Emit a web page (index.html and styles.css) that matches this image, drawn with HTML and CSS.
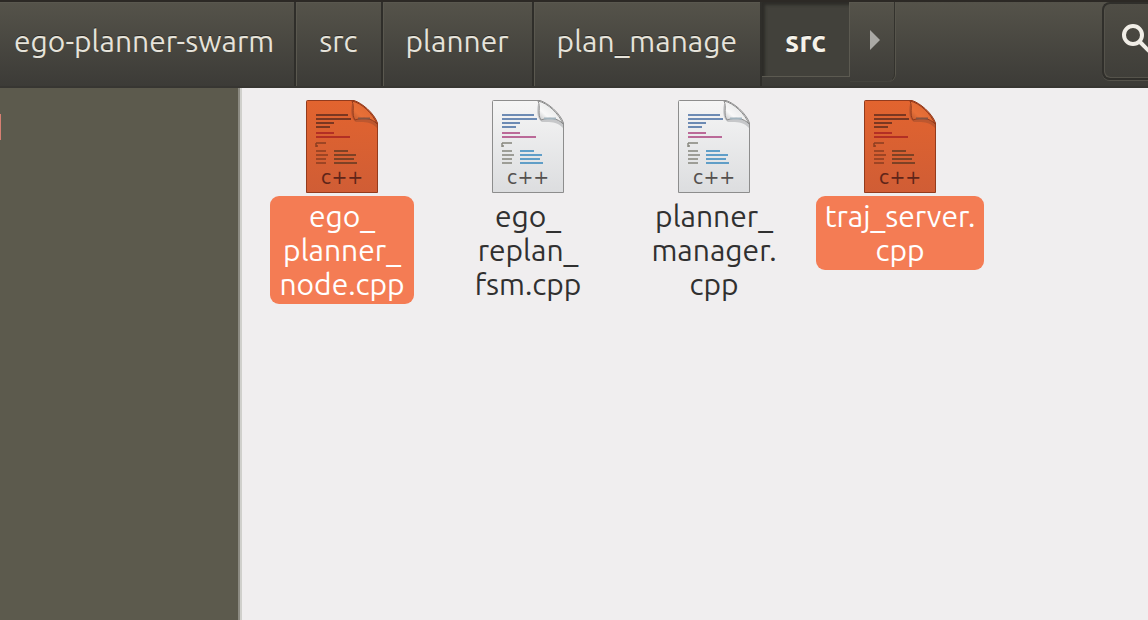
FILE: index.html
```html
<!DOCTYPE html>

<html lang="en">
    <head>
        <meta charset="UTF-8">
        <meta name="viewport" content="width=device-width, initial-scale=1.0">
        <title>src</title>
        <link rel="stylesheet" href="styles.css">
    </head>

    <body>
        <!-- shared file icon, colours come from .file-icon -->
        <svg class="defs" width="0" height="0" aria-hidden="true">
            <defs>
                <linearGradient id="paper" x1="0" y1="0" x2="0" y2="1">
                    <stop offset="0" stop-color="#f5f5f5"/>
                    <stop offset="1" stop-color="#dcdddf"/>
                </linearGradient>
                <linearGradient id="paper-selected" x1="0" y1="0" x2="0" y2="1">
                    <stop offset="0" stop-color="#e2642f"/>
                    <stop offset="1" stop-color="#d05d35"/>
                </linearGradient>
                <linearGradient id="curl" x1="0" y1="1" x2="1" y2="0">
                    <stop offset="0" stop-color="#a9abad"/>
                    <stop offset=".35" stop-color="#f8f8f8"/>
                    <stop offset="1" stop-color="#dadbdc"/>
                </linearGradient>
                <linearGradient id="curl-selected" x1="0" y1="1" x2="1" y2="0">
                    <stop offset="0" stop-color="#a9502c"/>
                    <stop offset=".35" stop-color="#e87038"/>
                    <stop offset="1" stop-color="#d96330"/>
                </linearGradient>
                <symbol id="cpp-file" viewBox="0 0 72 93">
                    <path class="page" d="M1.500 .5H48C56 3 68 13 71.500 23V92.500H.5V1.500Q.5 .5 1.500 .5Z"/>
                    <path class="fold-shadow" d="M46 4C44 13 46 20 50 22C57 22 65 21 71 28V23L50 6Z"/>
                    <path class="fold" d="M46 1C49 7 45 14 49 20C57 17 66 18 71 24C67 14 56 3 46 1Z"/>
                    <path class="fold-line" d="M52 18.500H64"/>
                    <g fill="none" stroke-width="1.4">
                        <path class="code-blue" d="M10 15H42M10 19H45M10 23H28M10 27H24"/>
                        <path class="code-pink" d="M10 33H28M10 37H44"/>
                        <path class="code-gray" d="M10 43H20M10 46H12M10 51H20M10 55H22M10 59H20M10 63H20M10 43V47"/>
                        <path class="code-light" d="M28 51H42M28 55H50M28 59H48M28 63H51"/>
                    </g>
                    <text class="file-type" x="15" y="84">c++</text>
                </symbol>
            </defs>
        </svg>

        <header class="toolbar">
            <nav class="path-bar" aria-label="Path">
                <button class="path-button root" type="button">ego-planner-swarm</button>
                <button class="path-button" type="button">src</button>
                <button class="path-button" type="button">planner</button>
                <button class="path-button" type="button">plan_manage</button>
                <button class="path-button active" type="button" aria-current="page">src</button>
                <button class="path-next" type="button" aria-label="Next folder">
                    <svg width="12" height="20" viewBox="0 0 12 20"><path d="M1 0L11 10L1 20Z"/></svg>
                </button>
            </nav>
            <button class="search-button" type="button" aria-label="Search">
                <svg width="36" height="36" viewBox="0 0 36 36">
                    <circle cx="12" cy="12" r="9"/>
                    <path d="M19 19L32 32"/>
                </svg>
            </button>
        </header>

        <div class="window">
            <aside class="sidebar">
                <div class="sidebar-marker"></div>
            </aside>
            <main class="files">
                <button class="file selected" type="button">
                    <svg class="file-icon" width="72" height="93"><use href="#cpp-file"/></svg>
                    <span class="file-name">ego_<br>planner_<br>node.cpp</span>
                </button>
                <button class="file" type="button">
                    <svg class="file-icon" width="72" height="93"><use href="#cpp-file"/></svg>
                    <span class="file-name">ego_<br>replan_<br>fsm.cpp</span>
                </button>
                <button class="file" type="button">
                    <svg class="file-icon" width="72" height="93"><use href="#cpp-file"/></svg>
                    <span class="file-name">planner_<br>manager.<br>cpp</span>
                </button>
                <button class="file selected" type="button">
                    <svg class="file-icon" width="72" height="93"><use href="#cpp-file"/></svg>
                    <span class="file-name">traj_server.<br>cpp</span>
                </button>
            </main>
        </div>
    </body>
</html>
```

FILE: styles.css
```css
* {
    box-sizing: border-box;
}

body {
    margin: 0;
    min-height: 100vh;
    display: flex;
    flex-direction: column;
    overflow-x: hidden;
    background-color: #f0eeef;
    color: #303030;
    font-family: Ubuntu, "Noto Sans", sans-serif;
    font-size: 30px;
}

button {
    margin: 0;
    padding: 0;
    border: none;
    background: none;
    color: inherit;
    font: inherit;
    cursor: pointer;
}

.defs {
    position: absolute;
}

.toolbar {
    display: flex;
    justify-content: space-between;
    height: 88px;
    border-top: 2px solid #2c2925;
    border-bottom: 2px solid #373632;
    background: linear-gradient(#55534a, #3c3b37);
    overflow: hidden;
}

.path-bar {
    display: flex;
}

.path-button {
    padding: 0 23px 6px;
    border-right: 2px solid #2f2e2a;
    box-shadow: inset 1px 1px #5a584f;
    color: #e6e3da;
    line-height: 34px;
    text-shadow: 0 -1px #2b2a26;
    white-space: nowrap;
}

.path-button.root {
    padding-left: 14px;
    padding-right: 20px;
    box-shadow: inset 0 1px #5a584f;
}

.path-button.active {
    height: 75px;
    padding-top: 4px;
    padding-bottom: 0;
    border-right: 1px solid #5c5a51;
    border-bottom: 1px solid #5c5a51;
    background-color: #42413b;
    box-shadow: inset 3px 3px 3px #2d2c28;
    color: #f5f2ea;
    font-weight: bold;
}

.path-next {
    width: 45px;
    height: 80px;
    padding: 0 0 4px 6px;
    border-right: 1px solid #33322d;
    border-bottom: 1px solid #45443e;
    border-radius: 0 0 8px 0;
    box-shadow: inset 0 1px #5a584f, 1px 0 #57554c;
}

.path-next svg {
    display: block;
    margin: auto;
    fill: #aaa9a5;
}

.search-button {
    width: 46px;
    height: 78px;
    padding-left: 17px;
    border: 2px solid #302f2b;
    border-right: none;
    border-radius: 8px 0 0 8px;
    background: linear-gradient(#4f4d45, #3f3e39);
    box-shadow: inset 1px -1px #55534b, 0 1px #55534b;
    overflow: hidden;
}

.search-button svg {
    display: block;
    fill: none;
    stroke: #f1eee7;
    stroke-width: 4;
}

.window {
    display: flex;
    flex: 1;
}

.sidebar {
    width: 242px;
    flex: none;
    padding-top: 26px;
    border-right: 2px solid #d0d0cc;
    background-color: #5c5a4d;
    box-shadow: inset -2px 0 #8c8b82;
}

.sidebar-marker {
    width: 1px;
    height: 26px;
    background-color: #d77f72;
}

.files {
    flex: 1;
    display: grid;
    grid-template-columns: repeat(auto-fill, 186px);
    align-content: start;
    padding: 12px 7px;
}

.file {
    display: flex;
    flex-direction: column;
    align-items: center;
    gap: 3px;
}

.file-icon {
    --page: url(#paper);
    --edge: #8d8d8d;
    --fold: url(#curl);
    --fold-shadow: #c6c7c9;
    --fold-line: #a4b5bf;
    --blue: #4169a0;
    --pink: #ab3f7c;
    --gray: #85857c;
    --light: #3486bd;
    --type: #55514f;
}

.selected .file-icon {
    --page: url(#paper-selected);
    --edge: #933b1d;
    --fold: url(#curl-selected);
    --fold-shadow: #bd572f;
    --fold-line: #865340;
    --blue: #5a2a1c;
    --pink: #a51f20;
    --gray: #8a3d20;
    --light: #603822;
    --type: #602519;
}

.page {
    fill: var(--page);
    stroke: var(--edge);
}

.fold {
    fill: var(--fold);
    stroke: var(--edge);
}

.fold-shadow {
    fill: var(--fold-shadow);
}

.fold-line {
    stroke: var(--fold-line);
    stroke-width: 2;
}

.code-blue {
    stroke: var(--blue);
}

.code-pink {
    stroke: var(--pink);
}

.code-gray {
    stroke: var(--gray);
}

.code-light {
    stroke: var(--light);
}

.file-type {
    fill: var(--type);
    font-family: "DejaVu Sans", sans-serif;
    font-size: 19px;
}

.file-name {
    padding: 3px 9px;
    border-radius: 9px;
    line-height: 34px;
}

.selected .file-name {
    background-color: #f47c54;
    color: #ffffff;
}
```
